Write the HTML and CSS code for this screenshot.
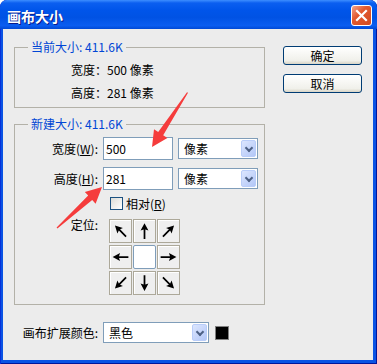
FILE: index.html
```html
<!DOCTYPE html>
<html lang="zh-CN">
<head>
    <meta charset="UTF-8">
    <title>画布大小</title>
    <link rel="stylesheet" href="styles.css">
</head>
<body>
    <div class="window">
        <div class="titlebar">
            <span class="title">画布大小</span>
            <div class="close">
                <svg width="13" height="13" viewBox="0 0 13 13"><path d="M2 2 L11 11 M11 2 L2 11" stroke="#fff" stroke-width="2.2" stroke-linecap="square"/></svg>
            </div>
        </div>

        <div class="client">
            <div class="main">
                <div class="groups">
                    <fieldset class="group">
                        <legend>当前大小: 411.6K</legend>
                        <div class="group-body current">
                            <div class="info-row">宽度：500 像素</div>
                            <div class="info-row">高度：281 像素</div>
                        </div>
                    </fieldset>

                    <fieldset class="group new">
                        <legend>新建大小: 411.6K</legend>
                        <div class="group-body form">
                            <span class="label">宽度(<u>W</u>):</span>
                            <div class="field">
                                <div class="textbox">500</div>
                                <div class="select unit"><span>像素</span><i class="drop"></i></div>
                            </div>

                            <span class="label">高度(<u>H</u>):</span>
                            <div class="field">
                                <div class="textbox">281</div>
                                <div class="select unit"><span>像素</span><i class="drop"></i></div>
                            </div>

                            <span></span>
                            <div class="check-row"><i class="checkbox"></i><span>相对(<u>R</u>)</span></div>

                            <span class="label anchor-label">定位:</span>
                            <div class="anchor">
                                <div class="cell"><svg viewBox="0 0 24 24"><g transform="rotate(-45 12 12)"><path class="arw" d="M12 3 L16.5 11.5 L13 10.3 L13 21 L11 21 L11 10.3 L7.5 11.5 Z"/></g></svg></div>
                                <div class="cell"><svg viewBox="0 0 24 24"><g><path class="arw" d="M12 3 L16.5 11.5 L13 10.3 L13 21 L11 21 L11 10.3 L7.5 11.5 Z"/></g></svg></div>
                                <div class="cell"><svg viewBox="0 0 24 24"><g transform="rotate(45 12 12)"><path class="arw" d="M12 3 L16.5 11.5 L13 10.3 L13 21 L11 21 L11 10.3 L7.5 11.5 Z"/></g></svg></div>
                                <div class="cell"><svg viewBox="0 0 24 24"><g transform="rotate(-90 12 12)"><path class="arw" d="M12 3 L16.5 11.5 L13 10.3 L13 21 L11 21 L11 10.3 L7.5 11.5 Z"/></g></svg></div>
                                <div class="cell center"></div>
                                <div class="cell"><svg viewBox="0 0 24 24"><g transform="rotate(90 12 12)"><path class="arw" d="M12 3 L16.5 11.5 L13 10.3 L13 21 L11 21 L11 10.3 L7.5 11.5 Z"/></g></svg></div>
                                <div class="cell"><svg viewBox="0 0 24 24"><g transform="rotate(-135 12 12)"><path class="arw" d="M12 3 L16.5 11.5 L13 10.3 L13 21 L11 21 L11 10.3 L7.5 11.5 Z"/></g></svg></div>
                                <div class="cell"><svg viewBox="0 0 24 24"><g transform="rotate(180 12 12)"><path class="arw" d="M12 3 L16.5 11.5 L13 10.3 L13 21 L11 21 L11 10.3 L7.5 11.5 Z"/></g></svg></div>
                                <div class="cell"><svg viewBox="0 0 24 24"><g transform="rotate(135 12 12)"><path class="arw" d="M12 3 L16.5 11.5 L13 10.3 L13 21 L11 21 L11 10.3 L7.5 11.5 Z"/></g></svg></div>
                            </div>
                        </div>
                    </fieldset>
                </div>

                <div class="buttons">
                    <div class="btn">确定</div>
                    <div class="btn">取消</div>
                </div>
            </div>

            <div class="bottom-row">
                <span class="label wide">画布扩展颜色:</span>
                <div class="select color"><span>黑色</span><i class="drop"></i></div>
                <div class="swatch"></div>
            </div>
        </div>

        <!-- red annotation arrows -->
        <svg class="marks" viewBox="0 0 377 364">
            <polygon points="188,92.8 163.2,135.2 167.4,138 152,147 154,129.2 158.2,132 187,92.2"/>
            <polygon points="57.4,228.4 92.2,200 95.6,203.7 102,187 84.8,191.9 88.2,195.6 56.6,227.6"/>
        </svg>
    </div>
</body>
</html>
```

FILE: styles.css
```css
* {
    margin: 0;
    padding: 0;
    box-sizing: border-box;
}

body {
    background: #fff;
    font-family: "Noto Sans CJK SC", "Noto Sans", sans-serif;
    font-size: 12px;
    line-height: 16px;
    color: #000;
}

/* Window frame */
.window {
    position: relative;
    width: 377px;
    height: 364px;
    background: #0a53e4;
    border-radius: 7px 7px 0 0;
    display: flex;
    flex-direction: column;
    overflow: hidden;
    box-shadow: inset 1px 0 #0831d9, inset -1px 0 #00169c, inset 0 -1px #00169c;
}

.titlebar {
    height: 29px;
    padding: 2px 5px 0 7px;
    display: flex;
    align-items: center;
    justify-content: space-between;
    background: linear-gradient(#3d8eff 0, #0b5ff0 3px, #0055ea 10px, #0052e4 60%, #0a5df0 88%, #0049d6 100%);
    border-radius: 7px 7px 0 0;
}

.title {
    color: #fff;
    font-size: 14px;
    font-weight: bold;
    text-shadow: 1px 1px 0 #0a1a8a;
}

.close {
    width: 21px;
    height: 21px;
    border: 1px solid #fff;
    border-radius: 3px;
    background: linear-gradient(135deg, #f3a58e 0%, #e2592f 40%, #d24a22 100%);
    display: flex;
    align-items: center;
    justify-content: center;
}

.client {
    flex: 1;
    margin: 0 4px 4px 3px;
    background: #ececec;
    padding: 10px 0 0 11px;
}

.main {
    display: flex;
    align-items: flex-start;
    gap: 18px;
}

/* Group boxes */
.groups {
    width: 251px;
}

.group {
    width: 251px;
    min-width: 0;
    border: 1px solid #b3b1a8;
    padding: 0;
}

.group legend {
    margin-left: 13px;
    padding: 0 3px;
    color: #0046d5;
}

.current {
    padding: 7px 0 6px 56px;
}

.info-row + .info-row {
    margin-top: 7px;
}

.new {
    margin-top: 8px;
}

.form {
    display: grid;
    grid-template-columns: 52px auto;
    column-gap: 5px;
    row-gap: 7px;
    align-items: center;
    padding: 5px 0 9px 31px;
}

.label {
    text-align: right;
    white-space: nowrap;
}

.field {
    display: flex;
    align-items: center;
    gap: 5px;
}

.textbox {
    width: 70px;
    height: 23px;
    border: 1px solid #7f9db9;
    background: #fff;
    padding: 0 2px;
    line-height: 21px;
}

.select {
    display: flex;
    align-items: stretch;
    justify-content: space-between;
    height: 21px;
    border: 1px solid #7f9db9;
    background: #fff;
    padding: 1px;
    line-height: 17px;
}

.select span {
    padding-left: 4px;
}

.unit {
    width: 80px;
}

.drop {
    width: 15px;
    border: 1px solid #b9cdf9;
    border-radius: 2px;
    background: linear-gradient(135deg, #dce6fe, #b3c7f7);
    position: relative;
}

.drop::after {
    content: '';
    position: absolute;
    left: 4px;
    top: 4px;
    width: 4px;
    height: 4px;
    border-right: 2px solid #4d6185;
    border-bottom: 2px solid #4d6185;
    transform: rotate(45deg);
}

.check-row {
    display: flex;
    align-items: center;
    gap: 3px;
    margin-left: 7px;
    line-height: 13px;
}

.checkbox {
    width: 13px;
    height: 13px;
    border: 1px solid #1c5180;
    background: linear-gradient(135deg, #dcdcd7, #fff);
}

.anchor-label {
    align-self: start;
}

.anchor {
    margin: 2px 0 0 6px;
    display: grid;
    grid-template-columns: repeat(3, 23px);
    grid-auto-rows: 24px;
    column-gap: 1px;
    row-gap: 2px;
}

.cell {
    border: 1px solid #aca899;
    background: #efefef;
    box-shadow: inset 1px 1px #fff;
}

.cell svg {
    width: 21px;
    height: 22px;
    display: block;
}

.arw {
    fill: #000;
}

.cell.center {
    background: #fff;
    border-color: #7f9db9;
    border-radius: 2px;
    box-shadow: none;
}

/* Buttons */
.buttons {
    margin-top: 7px;
    display: flex;
    flex-direction: column;
    gap: 9px;
}

.btn {
    width: 79px;
    height: 19px;
    border: 1px solid #003c74;
    border-radius: 3px;
    background: linear-gradient(#fff, #f0f0ea 80%, #d8d4c6);
    text-align: center;
    line-height: 17px;
}

/* Bottom row */
.bottom-row {
    margin-top: 17px;
    display: flex;
    align-items: center;
}

.label.wide {
    width: 84px;
    margin-right: 5px;
}

.color {
    width: 106px;
}

.swatch {
    width: 14px;
    height: 14px;
    margin-left: 6px;
    border: 1px solid #808080;
    background: #000;
}

/* Annotation overlay */
.marks {
    position: absolute;
    left: 0;
    top: 0;
    width: 377px;
    height: 364px;
    pointer-events: none;
}

.marks polygon {
    fill: #f53c3c;
}
```
